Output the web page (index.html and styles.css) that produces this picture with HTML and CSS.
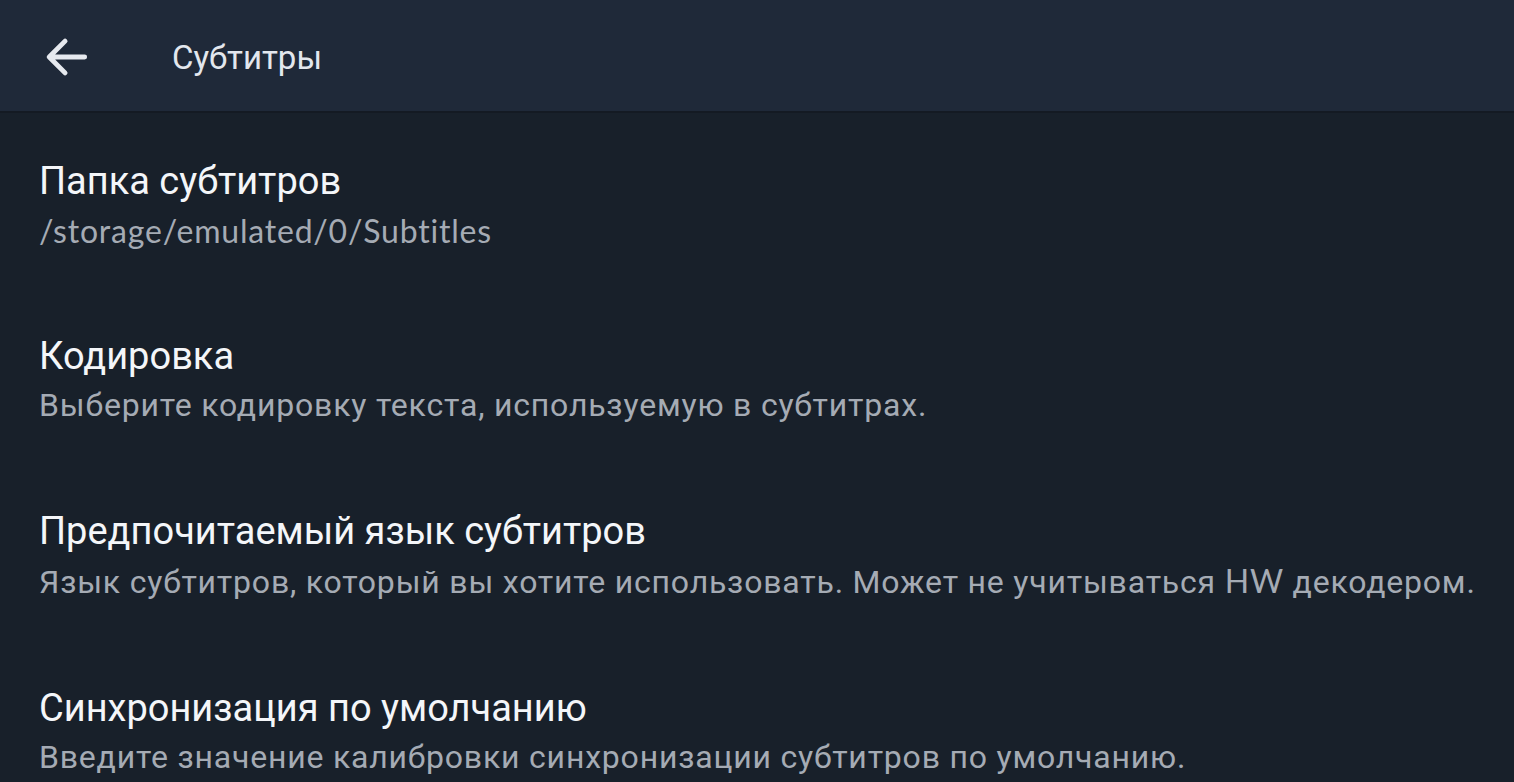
FILE: index.html
```html
<!DOCTYPE html>
<html lang="ru">

<head>
    <meta charset="UTF-8">
    <meta name="viewport" content="width=device-width, initial-scale=1.0">
    <link rel="stylesheet" href="styles.css">
    <title>Субтитры</title>
</head>

<body>
    <header class="toolbar">
        <button class="back-button" aria-label="Назад">
            <svg width="56" height="56" viewBox="0 0 24 24">
                <path d="M20 12H5.2M11.6 5.2L4.8 12L11.6 18.8" fill="none" stroke="#e6e9ef" stroke-width="2.1" stroke-linecap="round" stroke-linejoin="round" />
            </svg>
        </button>
        <h1 class="toolbar-title">Субтитры</h1>
    </header>

    <main class="settings">
        <div class="pref">
            <div class="pref-title">Папка субтитров</div>
            <div class="pref-summary latin">/storage/emulated/0/Subtitles</div>
        </div>
        <div class="pref">
            <div class="pref-title">Кодировка</div>
            <div class="pref-summary">Выберите кодировку текста, используемую в субтитрах.</div>
        </div>
        <div class="pref">
            <div class="pref-title">Предпочитаемый язык субтитров</div>
            <div class="pref-summary">Язык субтитров, который вы хотите использовать. Может не учитываться <span class="latin">HW</span> декодером.</div>
        </div>
        <div class="pref">
            <div class="pref-title">Синхронизация по умолчанию</div>
            <div class="pref-summary">Введите значение калибровки синхронизации субтитров по умолчанию.</div>
        </div>
    </main>
</body>

</html>
```

FILE: styles.css
```css
body {
    margin: 0;
    padding: 0;
    background-color: #18202a;
    font-family: 'Roboto', sans-serif;
    overflow: hidden;
}

.toolbar {
    display: flex;
    align-items: center;
    box-sizing: border-box;
    height: 113px;
    padding-top: 3px;
    background-color: #1f2939;
    border-bottom: 2px solid #141a23;
}

.back-button {
    width: 56px;
    height: 56px;
    margin-left: 38px;
    padding: 0;
    border: none;
    background: none;
}

.back-button svg {
    display: block;
}

.toolbar-title {
    margin: 0 0 0 78px;
    font-size: 33px;
    font-weight: 400;
    color: #e3e7ee;
}

.pref {
    padding: 44px 39px 33px;
}

.pref-title {
    font-size: 38px;
    line-height: 49px;
    color: #f4f6f9;
}

.pref-summary {
    font-size: 32px;
    line-height: 49px;
    letter-spacing: 0.8px;
    color: #a5abb4;
    white-space: nowrap;
}

.latin {
    font-family: 'Lato', 'Roboto', sans-serif;
}
```
